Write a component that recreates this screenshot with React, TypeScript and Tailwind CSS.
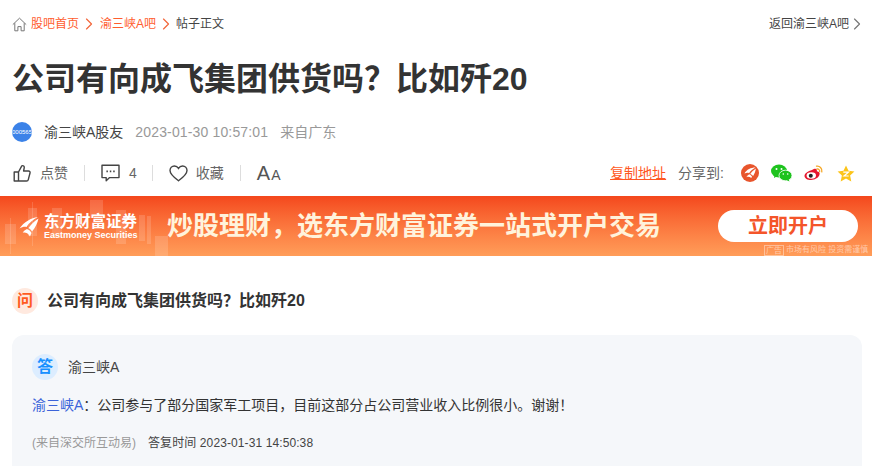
import { ChevronRight } from 'lucide-react';

const font = { fontFamily: '"Liberation Sans", "Noto Sans CJK SC", sans-serif' };

function Home() {
  return (
    <svg width="15" height="15" viewBox="0 0 15 15" fill="none" stroke="#777" strokeWidth="1">
      <path d="M0.8 7.6 7.5 1.2l6.7 6.4M2.8 6.2v7.6h3.1V9.6h3.2v4.2h3.1V6.2" />
    </svg>
  );
}

function ThumbUp() {
  return (
    <svg width="18" height="18" viewBox="0 0 18 18" fill="none" stroke="#444" strokeWidth="1.4" strokeLinejoin="round">
      <path d="M5.5 8v9H1.2V8zM5.5 8l3.3-6.2c1.5-.6 2.7.4 2.4 2L10.6 7h4.900c1.200 0 1.800 1 1.500 2l-1.700 6.600c-.2.900-.9 1.400-1.800 1.400H5.500" />
    </svg>
  );
}

function Comment() {
  return (
    <svg width="19" height="18" viewBox="0 0 19 18" fill="none" stroke="#444" strokeWidth="1.4" strokeLinejoin="round">
      <path d="M1 1.200h17v12.400H8.600L5.200 16.800v-3.200H1z" />
      <path d="M5.400 7.400h1.500M8.800 7.400h1.500M12.200 7.400h1.500" strokeWidth="1.600" />
    </svg>
  );
}

function Heart() {
  return (
    <svg width="19" height="17" viewBox="0 0 19 17" fill="none" stroke="#444" strokeWidth="1.4">
      <path d="M9.500 15.800C4.500 12.200 1 9.300 1 5.600 1 3 3 1 5.400 1c1.700 0 3.200.9 4.100 2.400C10.400 1.900 11.900 1 13.600 1 16 1 18 3 18 5.600c0 3.700-3.500 6.600-8.500 10.200z" />
    </svg>
  );
}

function ShareEastmoney() {
  return (
    <svg width="18" height="18" viewBox="0 0 18 18">
      <circle cx="9" cy="9" r="9" fill="#e8552c" />
      <path d="M14.500 3.500C10 3.500 5.500 5.500 3.500 9.500c2-.8 3.500-.8 4.500-.3C9.500 6.800 11.800 5 14.500 3.500zM14.800 4.500c-2.500 1.800-4.500 3.800-5.600 5.600 1.200.3 2.200 1 2.900 2 1.400-2.300 2.500-5 2.700-7.600zM8.300 10.200c-1.300.7-2.300 1.700-3 3 1.500-.6 3.300-.5 5 .7.200-.5.500-.9.700-1.400-.7-1.100-1.600-1.900-2.700-2.300z" fill="#fff" />
    </svg>
  );
}

function ShareWechat() {
  return (
    <svg width="21" height="18" viewBox="0 0 21 18">
      <ellipse cx="8" cy="7" rx="8" ry="6.500" fill="#1ec31e" />
      <path d="M3.500 10.500 3 14l3.500-2z" fill="#1ec31e" />
      <ellipse cx="14.500" cy="11.500" rx="6.500" ry="5.300" fill="#1ec31e" stroke="#fff" strokeWidth="0.8" />
      <path d="M17.500 15l1 2.500-3.200-1.500z" fill="#1ec31e" />
      <circle cx="5.500" cy="5" r="1" fill="#fff" />
      <circle cx="10.500" cy="5" r="1" fill="#fff" />
      <circle cx="12.300" cy="10" r="0.800" fill="#fff" />
      <circle cx="16.700" cy="10" r="0.800" fill="#fff" />
    </svg>
  );
}

function ShareWeibo() {
  return (
    <svg width="20" height="18" viewBox="0 0 20 18">
      <path d="M8 6c3.500-2.200 5.500-1.200 4.800 1.300 2.500.3 3.500 2 2.500 4-1.200 2.700-4.800 4.700-8.300 4.700C3.500 16 .5 14.500.5 11.700.5 9.700 4 7 8 6z" fill="#e6162d" />
      <ellipse cx="7.300" cy="11.500" rx="4.700" ry="3.300" fill="#fff" />
      <circle cx="6.800" cy="11.700" r="2" fill="#222" />
      <path d="M12.500 2.200c3-.6 6 2 5.300 5.600M13 5c1.600-.3 3 1 2.600 2.700" fill="none" stroke="#f5a623" strokeWidth="1.300" strokeLinecap="round" />
    </svg>
  );
}

function ShareStar() {
  return (
    <svg width="18" height="17" viewBox="0 0 18 17">
      <path d="M9 .5l2.500 5.300 5.900.7-4.300 4 1.200 5.900L9 13.500l-5.300 2.900 1.200-5.900-4.300-4 5.900-.7z" fill="#fcc419" />
      <path d="M6.300 7.200h5.200L7 11h4.700" fill="none" stroke="#fff" strokeWidth="1.200" />
    </svg>
  );
}

function BannerCandles() {
  return (
    <svg className="absolute left-0 top-0" width="872" height="60" viewBox="0 0 872 60" fill="#fff" fillOpacity="0.15">
      <rect x="5" y="28" width="11" height="20" />
      <rect x="10" y="22" width="1" height="36" />
      <rect x="28" y="12" width="9" height="28" />
      <rect x="32" y="6" width="1" height="44" />
      <rect x="52" y="12" width="10" height="30" />
      <rect x="90" y="4" width="13" height="18" />
      <rect x="116" y="14" width="10" height="34" />
      <rect x="139" y="19" width="6" height="26" />
      <rect x="155" y="40" width="13" height="20" />
      <rect x="147" y="20" width="4" height="28" />
    </svg>
  );
}

function BannerLogo() {
  return (
    <svg width="20" height="21" viewBox="0 0 20 21" fill="#fff">
      <path d="M19 1C12 2 5 6 0.500 12.500 3 11 5.500 10.500 7.500 11 10 7 14 3.500 19 1z" />
      <path d="M19.500 2.500C15 5.500 11.500 9 9.500 12c1.500.7 2.800 2 3.500 3.500 3-3.500 5.500-8.500 6.500-13z" />
      <path d="M8 13c-1.800.7-3.300 2-4.300 3.800 2.200-.5 5-.2 7.300 3.700.5-1.300 1.200-2.700 1.500-3.500C11.500 15 10 13.700 8 13z" />
    </svg>
  );
}

export default function App() {
  return (
    <div className="w-[872px] h-[466px] overflow-hidden bg-white text-[#333]" style={font}>
      {/* crumbs */}
      <div className="flex items-center justify-between h-[48px] pl-3 pr-[5px] text-xs">
        <div className="flex items-center">
          <Home />
          <a className="ml-[4px] text-[#ff5d2e]">股吧首页</a>
          <ChevronRight className="text-[#f2663a]" size={20} strokeWidth={1.4} />
          <a className="ml-[1px] text-[#ff5d2e]">渝三峡A吧</a>
          <ChevronRight className="text-[#f2663a]" size={20} strokeWidth={1.4} />
          <span className="text-[#444]">帖子正文</span>
        </div>
        <div className="flex items-center text-[#444]">
          返回渝三峡A吧
          <ChevronRight className="-ml-[2px] text-[#777]" size={20} strokeWidth={1.4} />
        </div>
      </div>

      <h1 className="pl-3 h-[62px] text-[32px] leading-[62px] font-bold text-[#333]">公司有向成飞集团供货吗？比如歼20</h1>

      {/* author row */}
      <div className="flex items-center h-[44px] pl-3 text-sm">
        <div className="flex w-5 h-5 items-center justify-center overflow-hidden rounded-full bg-[#3b82e8] text-[6px] text-white">000565</div>
        <span className="ml-3 text-[#444]">渝三峡A股友</span>
        <span className="ml-3 tracking-[0.15px] text-[#999]">2023-01-30 10:57:01</span>
        <span className="ml-3 text-[#999]">来自广东</span>
      </div>

      {/* actions */}
      <div className="flex items-center justify-between h-[38px] pl-[13px] pr-[17px] text-sm">
        <div className="flex items-center text-[#666]">
          <ThumbUp />
          <span className="ml-[9px]">点赞</span>
          <span className="mx-4 w-px h-4 bg-[#ddd]" />
          <Comment />
          <span className="ml-[9px]">4</span>
          <span className="ml-[15px] mr-4 w-px h-4 bg-[#ddd]" />
          <Heart />
          <span className="ml-2">收藏</span>
          <span className="mx-4 w-px h-4 bg-[#ddd]" />
          <span className="text-xl leading-none text-[#555]">A</span>
          <span className="ml-[1px] text-sm leading-none mt-[3px] text-[#555]">A</span>
        </div>
        <div className="flex items-center">
          <a className="underline text-[#ff5722]">复制地址</a>
          <span className="ml-3 text-[#666]">分享到:</span>
          <span className="flex items-center gap-3 ml-[17px]">
            <ShareEastmoney />
            <ShareWechat />
            <ShareWeibo />
            <span className="ml-[1px] flex"><ShareStar /></span>
          </span>
        </div>
      </div>

      {/* ad banner */}
      <div className="relative flex items-center h-[60px] mt-[4px] overflow-hidden bg-gradient-to-b from-[#f4471c] to-[#ff9d59]">
        <BannerCandles />
        <div className="relative flex items-center ml-[19px]">
          <BannerLogo />
          <div className="ml-[5px] w-[93px] text-white">
            <div className="text-[15.500px] leading-[17px] font-bold whitespace-nowrap">东方财富证券</div>
            <div className="text-[9px] leading-[10px] font-bold whitespace-nowrap">Eastmoney Securities</div>
          </div>
        </div>
        <div className="relative ml-[30px] text-[26px] font-bold text-[#fff3dc] whitespace-nowrap">炒股理财，选东方财富证券一站式开户交易</div>
        <div className="relative flex items-center justify-center ml-[57px] w-[140px] h-[32px] rounded-full bg-white text-xl font-bold text-[#f4552a]">立即开户</div>
        <div className="absolute right-0 bottom-0 flex items-center w-[108px] text-[8px] leading-[12px] text-white/50 whitespace-nowrap">
          <span className="mr-[2px] px-[1px] border border-white/40 leading-[9px]">广告</span>
          市场有风险 投资需谨慎
        </div>
      </div>

      {/* question */}
      <div className="flex items-center mt-[32px] pl-3 h-[26px]">
        <div className="flex w-[26px] h-[26px] items-center justify-center rounded-full bg-[#ffe9df] text-base font-bold text-[#ff5a1f]">问</div>
        <span className="ml-[9px] text-base font-bold text-[#333]">公司有向成飞集团供货吗？比如歼20</span>
      </div>

      {/* answer */}
      <div className="mt-[21px] ml-3 mr-[10px] h-[160px] rounded-xl bg-[#f5f7fa] px-5 pt-[19px]">
        <div className="flex items-center h-[26px]">
          <div className="flex w-[26px] h-[26px] items-center justify-center rounded-full bg-[#dcedff] text-base font-bold text-[#1890ff]">答</div>
          <span className="ml-[10px] text-sm text-[#444]">渝三峡A</span>
        </div>
        <p className="mt-[13px] text-sm leading-[24px] text-[#333]">
          <span className="text-[#3b63d9]">渝三峡A</span>：公司参与了部分国家军工项目，目前这部分占公司营业收入比例很小。谢谢！
        </p>
        <div className="flex mt-[14px] text-xs leading-[24px]">
          <span className="text-[#999]">(来自深交所互动易)</span>
          <span className="ml-3 tracking-[0.1px] text-[#444]">答复时间 2023-01-31 14:50:38</span>
        </div>
      </div>
    </div>
  );
}
